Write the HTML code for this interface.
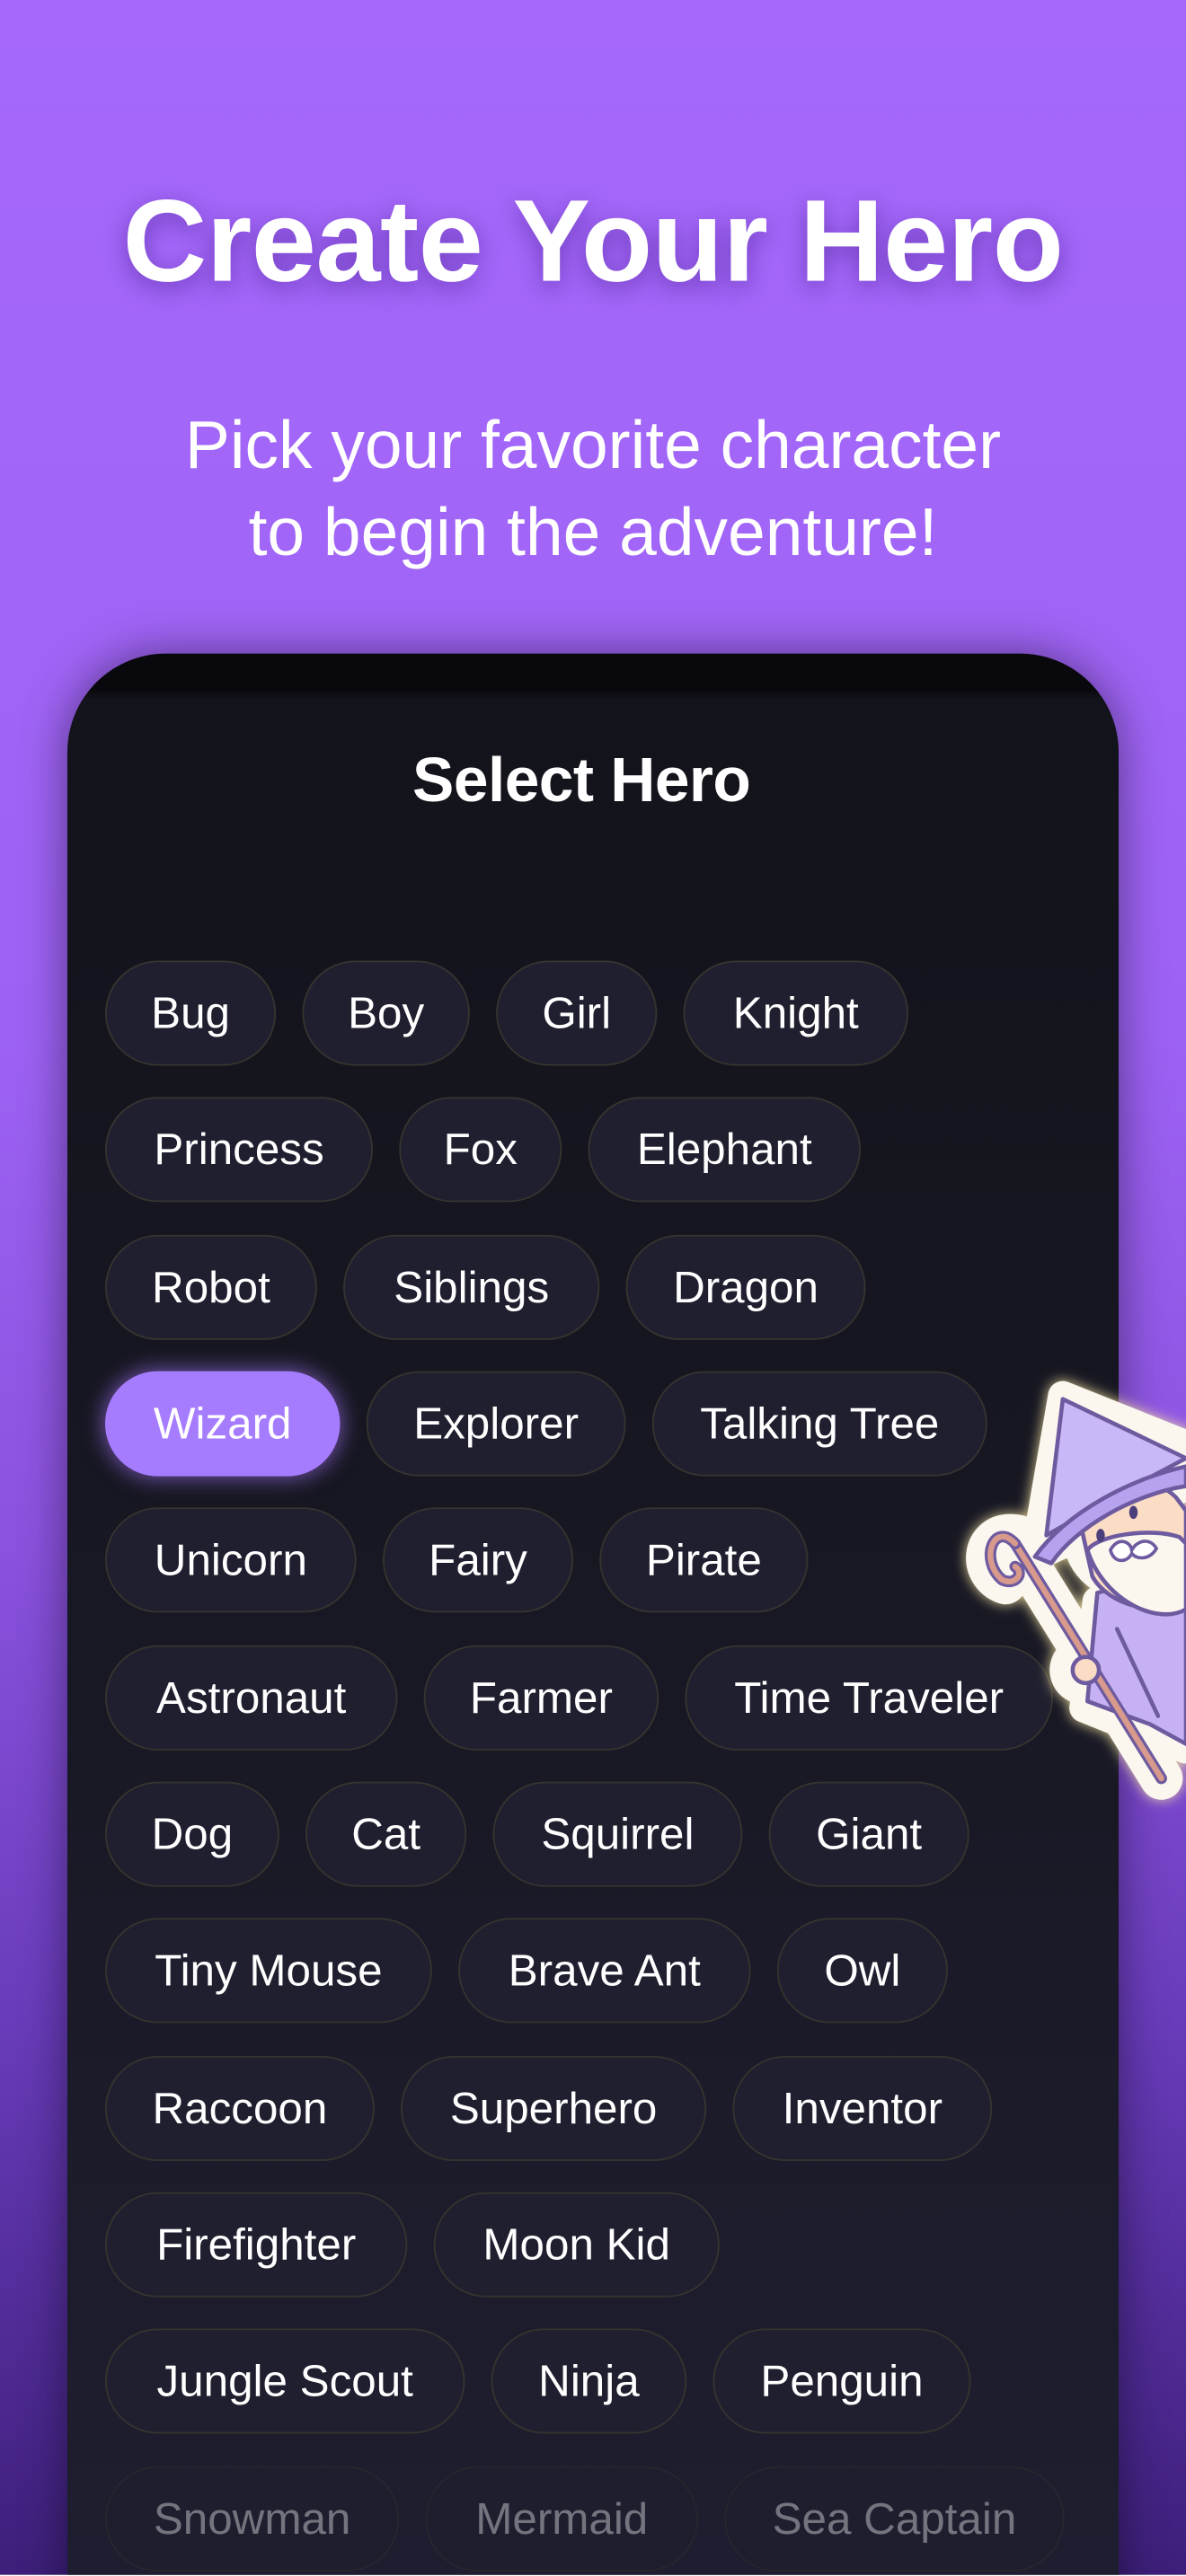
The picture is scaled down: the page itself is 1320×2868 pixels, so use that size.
<!DOCTYPE html>
<html><head><meta charset="utf-8">
<style>
html,body{margin:0;padding:0;width:1320px;height:2868px;overflow:hidden;}
body{font-family:"Liberation Sans",sans-serif;position:relative;}
#wrap{position:absolute;left:0;top:0;width:1320px;height:2868px;overflow:hidden;}
#s{position:absolute;left:0;top:0;width:722px;height:1568px;overflow:hidden;transform:scale(1.82825);transform-origin:0 0;background:linear-gradient(180deg,#a568fa 0%,#9d62f4 40%,#8a52de 60%,#6a3cbc 78%,#3d1f7a 100%);}
h1{position:absolute;left:0;width:722px;top:106px;margin:0;text-align:center;color:#fff;font-size:71px;font-weight:bold;letter-spacing:-0.3px;text-shadow:0 4px 14px rgba(70,30,140,.55);line-height:84px;}
.sub{position:absolute;left:0;width:722px;top:245px;text-align:center;color:#fff;font-size:41px;line-height:53px;}
.card{position:absolute;left:41px;top:398px;width:640px;height:1260px;border-radius:60px;background:linear-gradient(180deg,#09090d 0px,#09090d 22px,#13131b 28px,#171722 500px,#1e1e30 1170px);box-shadow:0 0 28px rgba(0,0,0,.45);overflow:hidden;}
.card h2{position:absolute;left:-7px;width:640px;top:57px;margin:0;text-align:center;color:#fff;font-size:38px;font-weight:bold;letter-spacing:-0.3px;}
.c{position:absolute;height:64px;box-sizing:border-box;border:1px solid #36342f;border-radius:32px;background:#1f1f2f;color:#fff;font-size:27px;line-height:62px;text-align:center;white-space:nowrap;}
.sel{background:#a67cff;border-color:#a67cff;box-shadow:0 0 12px 2px rgba(170,120,255,.55);}
.fade{opacity:.38;}
</style></head><body>
<div id="wrap">
<div id="s">
<h1>Create Your Hero</h1>
<div class="sub">Pick your favorite character<br>to begin the adventure!</div>
<div class="card">
<h2>Select Hero</h2>
</div>
<div class="c" style="left:64px;top:585px;width:104px">Bug</div>
<div class="c" style="left:184px;top:585px;width:102px">Boy</div>
<div class="c" style="left:302px;top:585px;width:98px">Girl</div>
<div class="c" style="left:416px;top:585px;width:137px">Knight</div>

<div class="c" style="left:64px;top:668px;width:163px">Princess</div>
<div class="c" style="left:243px;top:668px;width:99px">Fox</div>
<div class="c" style="left:358px;top:668px;width:166px">Elephant</div>

<div class="c" style="left:64px;top:752px;width:129px">Robot</div>
<div class="c" style="left:209px;top:752px;width:156px">Siblings</div>
<div class="c" style="left:381px;top:752px;width:146px">Dragon</div>

<div class="c sel" style="left:64px;top:835px;width:143px">Wizard</div>
<div class="c" style="left:223px;top:835px;width:158px">Explorer</div>
<div class="c" style="left:397px;top:835px;width:204px">Talking Tree</div>

<div class="c" style="left:64px;top:918px;width:153px">Unicorn</div>
<div class="c" style="left:233px;top:918px;width:116px">Fairy</div>
<div class="c" style="left:365px;top:918px;width:127px">Pirate</div>

<div class="c" style="left:64px;top:1002px;width:178px">Astronaut</div>
<div class="c" style="left:258px;top:1002px;width:143px">Farmer</div>
<div class="c" style="left:417px;top:1002px;width:224px">Time Traveler</div>

<div class="c" style="left:64px;top:1085px;width:106px">Dog</div>
<div class="c" style="left:186px;top:1085px;width:98px">Cat</div>
<div class="c" style="left:300px;top:1085px;width:152px">Squirrel</div>
<div class="c" style="left:468px;top:1085px;width:122px">Giant</div>

<div class="c" style="left:64px;top:1168px;width:199px">Tiny Mouse</div>
<div class="c" style="left:279px;top:1168px;width:178px">Brave Ant</div>
<div class="c" style="left:473px;top:1168px;width:104px">Owl</div>

<div class="c" style="left:64px;top:1252px;width:164px">Raccoon</div>
<div class="c" style="left:244px;top:1252px;width:186px">Superhero</div>
<div class="c" style="left:446px;top:1252px;width:158px">Inventor</div>

<div class="c" style="left:64px;top:1335px;width:184px">Firefighter</div>
<div class="c" style="left:264px;top:1335px;width:174px">Moon Kid</div>

<div class="c" style="left:64px;top:1418px;width:219px">Jungle Scout</div>
<div class="c" style="left:299px;top:1418px;width:119px">Ninja</div>
<div class="c" style="left:434px;top:1418px;width:157px">Penguin</div>

<div class="c fade" style="left:64px;top:1502px;width:179px">Snowman</div>
<div class="c fade" style="left:259px;top:1502px;width:166px">Mermaid</div>
<div class="c fade" style="left:441px;top:1502px;width:207px">Sea Captain</div>

<svg style="position:absolute;left:0;top:0" width="722" height="1568" viewBox="0 0 722 1568">
<defs>
<filter id="g" x="-30%" y="-30%" width="160%" height="160%"><feDropShadow dx="0" dy="0" stdDeviation="4" flood-color="#f3e2a0" flood-opacity=".9"/></filter>
</defs>
<g filter="url(#g)" fill="#fbf7ef" stroke="#fbf7ef" stroke-width="18" stroke-linejoin="round" stroke-linecap="round">
<polygon points="647,850 630,948 722,905 722,880"/>
<circle cx="686" cy="935" r="30"/>
<path d="M668,975 L722,955 L722,1065 L660,1040 Z"/>
<path d="M618,940 L707,1083" fill="none" stroke-width="26"/>
<path d="M612,964 C596,958 598,935 615,935 C630,935 632,948 622,952" fill="none" stroke-width="26"/>
<circle cx="660" cy="1017" r="12"/>
</g>
<path d="M668,970 L722,955 L722,1062 L700,1050 L662,1036 Z" fill="#c5b1f3" stroke="#6d5a9f" stroke-width="2.5" stroke-linejoin="round"/>
<path d="M680,992 L705,1045" stroke="#6d5a9f" stroke-width="2.5" fill="none" stroke-linecap="round"/>
<path d="M656,920 C660,900 700,895 716,912 L722,920 L722,975 C705,985 675,978 665,960 Z" fill="#fbdcc4" stroke="#6d5a9f" stroke-width="2.5"/>
<path d="M662,944 C668,935 700,930 718,936 L722,940 L722,980 C705,990 672,975 662,944 Z" fill="#fbf7ef" stroke="#6d5a9f" stroke-width="2.5"/>
<path d="M676,944 C680,936 688,938 689,944 C692,938 700,936 704,943 C700,950 692,950 689,946 C686,952 678,952 676,944 Z" fill="#fff" stroke="#6d5a9f" stroke-width="2"/>
<ellipse cx="670" cy="935" rx="2.6" ry="4" fill="#4b3f7a"/>
<ellipse cx="690" cy="921" rx="2.6" ry="4" fill="#4b3f7a"/>
<polygon points="647,852 637,935 690,905 722,888" fill="#c9b8f7" stroke="#6d5a9f" stroke-width="2.5" stroke-linejoin="round"/>
<path d="M630,948 C650,920 690,900 722,893 L722,905 C690,910 655,930 640,952 Z" fill="#b7a2ef" stroke="#6d5a9f" stroke-width="2.5" stroke-linejoin="round"/>
<path d="M618,940 L707,1083" stroke="#6d5a9f" stroke-width="7" stroke-linecap="round" fill="none"/>
<path d="M618,940 L707,1083" stroke="#d99a8e" stroke-width="3.5" stroke-linecap="round" fill="none"/>
<path d="M618,940 C605,926 596,950 610,962 C618,966 624,958 618,954" fill="none" stroke="#6d5a9f" stroke-width="7" stroke-linecap="round"/>
<path d="M618,940 C605,926 596,950 610,962 C618,966 624,958 618,954" fill="none" stroke="#d99a8e" stroke-width="3.5" stroke-linecap="round"/>
<circle cx="661" cy="1017" r="8" fill="#fbdcc4" stroke="#6d5a9f" stroke-width="2.5"/>
</svg>
</div>
</div>
</body></html>
